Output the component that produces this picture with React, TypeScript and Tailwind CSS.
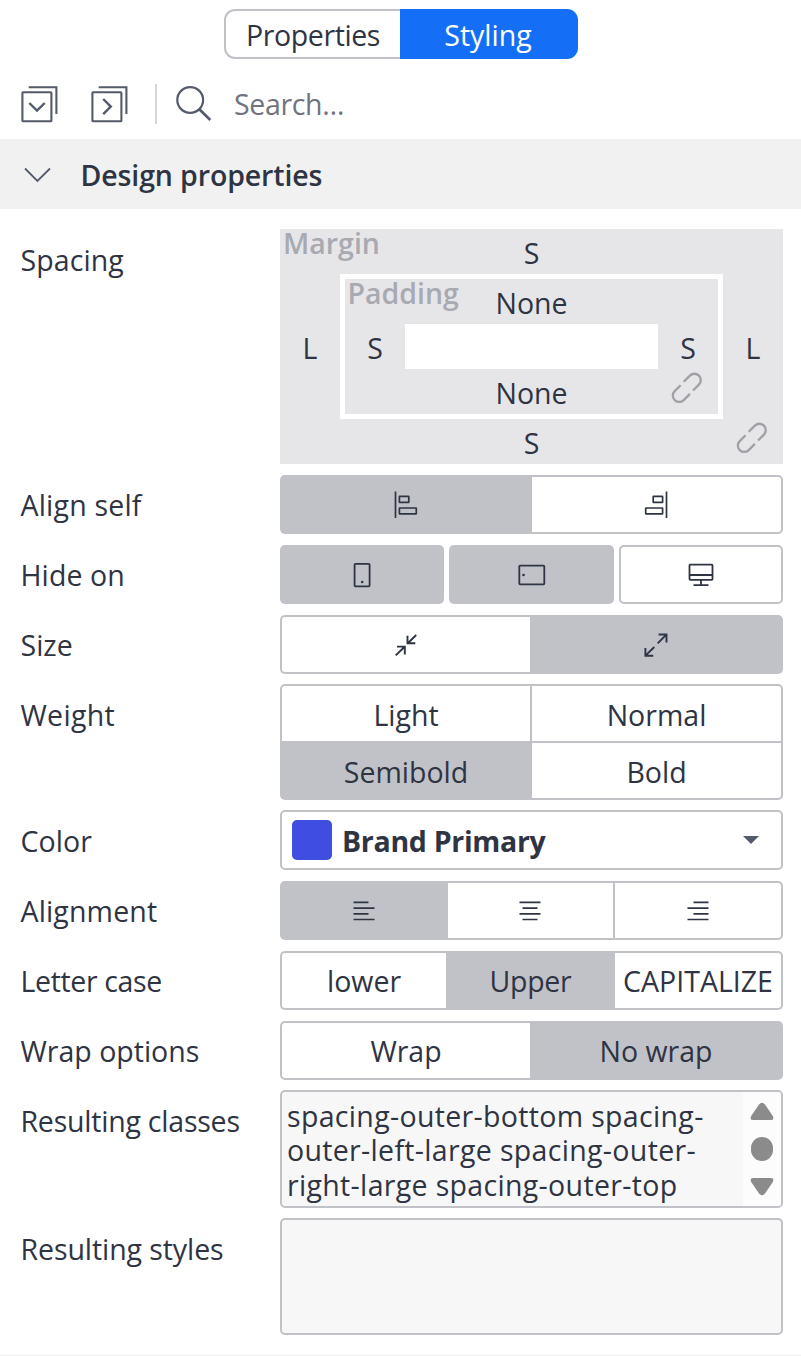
import type { ReactNode } from "react";

function Row({ label, offset = "pt-[10px]", tracking, className, children }: { label: string; offset?: string; tracking: string; className: string; children: ReactNode }) {
  return (
    <div className={`flex items-start ${className}`}>
      <div className={`w-[280px] shrink-0 pl-[20.5px] leading-[40px] whitespace-nowrap ${offset} ${tracking}`}>{label}</div>
      <div className="w-[503px]">{children}</div>
    </div>
  );
}

const cell = "flex items-center justify-center whitespace-nowrap";
const group = "flex h-[59px] rounded-[5px] bg-[#c1c2c8] p-[2px]";
const left = "rounded-l-[3px] bg-white";
const right = "rounded-r-[3px] bg-white";
const svgBase = { fill: "none", stroke: "#2f3443" };

function StackIcon({ d }: { d: string }) {
  return (
    <svg width="38" height="38" viewBox="0 0 38 38" fill="none" stroke="#535a69" strokeWidth="2.1">
      <rect x="2.4" y="7.2" width="29" height="29" rx="0.8" />
      <path d="M8.7 2.2H36.4V29" />
      <path d={d} strokeWidth="2.4" />
    </svg>
  );
}

function LinkIcon() {
  return (
    <svg width="32" height="32" viewBox="0 0 32 32" fill="none" stroke="#9fa1a7" strokeWidth="2.3">
      <path d="M12.7 9.8L18.9 3.6A6.35 6.35 0 0 1 27.9 12.6L22 18.5" />
      <path d="M18.9 21.9L12.7 28.1A6.35 6.35 0 0 1 3.7 19.1L9.6 13.2" />
    </svg>
  );
}

function AlignSelfIcon({ end = false }: { end?: boolean }) {
  return (
    <svg width="24" height="28" viewBox="0 0 24 28" {...svgBase} strokeWidth="1.7" className={end ? "-scale-x-100" : ""}>
      <path d="M1.5 0.5V27" />
      <rect x="5.4" y="5.4" width="9.4" height="6" rx="0.4" />
      <rect x="5.4" y="17" width="16.9" height="5.8" rx="0.4" />
    </svg>
  );
}

function LinesIcon({ d }: { d: string }) {
  return (
    <svg width="22" height="20" viewBox="0 0 22 20" {...svgBase} strokeWidth="1.7">
      <path d={d} />
    </svg>
  );
}

export default function App() {
  return (
    <div className="flex h-[1356px] w-[801px] flex-col overflow-hidden border-b border-[#ededee] bg-white font-['Open_Sans','Noto_Sans',sans-serif] text-[28.5px] text-[#2f3443]">
      <div className="ml-[224px] mt-[9px] flex h-[50px] w-[354px] shrink-0">
        <div className="flex w-[176px] items-center justify-center rounded-l-[11px] border-2 border-r-0 border-[#c1c2c8] pt-[3px] tracking-[-0.4px]">
          Properties
        </div>
        <div className="flex flex-1 items-center justify-center rounded-r-[11px] bg-[#146ff6] pr-[2px] pt-[3px] text-white">Styling</div>
      </div>

      <div className="mt-[25px] flex h-[40px] shrink-0 items-center pl-[20px] text-[#70747f]">
        <StackIcon d="M9.3 18L17 25.6L24.7 18" />
        <div className="w-[32px]" />
        <StackIcon d="M13.2 14L20.8 21.6L13.2 29.2" />
        <div className="ml-[27px] h-[40px] w-[2px] bg-[#d5d6d9]" />
        <svg className="ml-[18px]" width="38" height="38" viewBox="0 0 38 38" fill="none" stroke="#535a69" strokeWidth="2.2">
          <circle cx="15.2" cy="15" r="12.9" />
          <path d="M24.3 24.2L35.3 35" strokeWidth="2.7" />
        </svg>
        <div className="ml-[21px] mt-[-1px] leading-[40px] tracking-[-0.35px]">Search…</div>
      </div>

      <div className="mt-[15px] flex h-[70px] shrink-0 items-center bg-[#f1f1f2] pl-[24px] pt-[2px] font-semibold">
        <svg width="27" height="16" viewBox="0 0 27 16" fill="none" stroke="#535a69" strokeWidth="1.8">
          <path d="M1 1.5L13.4 14L26 1.5" />
        </svg>
        <div className="ml-[29.5px] tracking-[-0.12px]">Design properties</div>
      </div>

      <Row label="Spacing" offset="pt-[11px]" tracking="tracking-[0.1px]" className="mt-[20px] h-[246px]">
        <div className="relative flex h-[235px] flex-col bg-[#e6e6e9]">
          <div className="absolute left-[3px] top-[-6px] leading-[40px] font-semibold text-[#a9aab1]">Margin</div>
          <div className="flex h-[45px] items-center justify-center pt-[4px]">S</div>
          <div className="flex h-[145px]">
            <div className="flex w-[60px] items-center justify-center pt-[4px]">L</div>
            <div className="relative flex w-[383px] flex-col border-5 border-white">
              <div className="absolute left-[2.5px] top-[-6px] leading-[40px] font-semibold text-[#a9aab1]">Padding</div>
              <div className="flex h-[45px] items-center justify-center pt-[4px]">None</div>
              <div className="flex h-[45px]">
                <div className="flex w-[60px] items-center justify-center pt-[4px]">S</div>
                <div className="w-[253px] bg-white" />
                <div className="flex w-[60px] items-center justify-center pt-[4px]">S</div>
              </div>
              <div className="flex h-[45px] items-center justify-center pt-[4px]">None</div>
              <div className="absolute left-[326px] top-[93px]"><LinkIcon /></div>
            </div>
            <div className="flex w-[60px] items-center justify-center pt-[4px]">L</div>
          </div>
          <div className="flex h-[45px] items-center justify-center pt-[4px]">S</div>
          <div className="absolute left-[456px] top-[193px]"><LinkIcon /></div>
        </div>
      </Row>

      <Row label="Align self" tracking="tracking-[0.2px]" className="h-[70px]">
        <div className={group}>
          <div className={`${cell} w-[250px] pr-[2px]`}><AlignSelfIcon /></div>
          <div className={`${cell} ${right} flex-1 pr-[2px]`}><AlignSelfIcon end /></div>
        </div>
      </Row>

      <Row label="Hide on" tracking="tracking-[0.1px]" className="h-[70px]">
        <div className="flex gap-[5px]">
          <div className={`${cell} h-[59px] w-[164px] rounded-[5px] bg-[#c1c2c8]`}>
            <svg width="18" height="26" viewBox="0 0 18 26" {...svgBase} strokeWidth="1.8">
              <rect x="1.6" y="1.9" width="15" height="22.4" rx="0.8" />
              <circle cx="9.2" cy="20" r="1.3" fill="#2f3443" stroke="none" />
            </svg>
          </div>
          <div className={`${cell} h-[59px] w-[165px] rounded-[5px] bg-[#c1c2c8]`}>
            <svg width="28" height="22" viewBox="0 0 28 22" {...svgBase} strokeWidth="1.8">
              <rect x="1.3" y="1.7" width="25" height="18.6" rx="0.8" />
              <circle cx="5.5" cy="11" r="1.3" fill="#2f3443" stroke="none" />
            </svg>
          </div>
          <div className={`${cell} h-[59px] w-[164px] rounded-[5px] border-2 border-[#c1c2c8]`}>
            <svg width="26" height="24" viewBox="0 0 26 24" {...svgBase} strokeWidth="1.8">
              <rect x="1.5" y="1.6" width="23" height="15.2" rx="0.8" />
              <path d="M1.4 12H24.6M13 17V22M5.5 22.2H20.5" />
            </svg>
          </div>
        </div>
      </Row>

      <Row label="Size" tracking="tracking-[0px]" className="h-[69px]">
        <div className={group}>
          <div className={`${cell} ${left} w-[248px]`}>
            <svg width="24" height="24" viewBox="0 0 24 24" {...svgBase} strokeWidth="1.9">
              <path d="M22.2 2L13.8 10.2M13.5 2.8V10.3H21.3M1.7 22.4L10.4 14M3 13.6H10.8V21.4" />
            </svg>
          </div>
          <div className={`${cell} flex-1`}>
            <svg width="24" height="24" viewBox="0 0 24 24" {...svgBase} strokeWidth="1.9">
              <path d="M13.7 10.4L22.3 1.6M14.6 1.5H22.5V9.4M10.3 14L1.5 22.6M1.4 15V22.7H9.2" />
            </svg>
          </div>
        </div>
      </Row>

      <Row label="Weight" offset="pt-[11px]" tracking="tracking-[0.3px]" className="h-[126px]">
        <div className="grid h-[116px] grid-cols-[248px_249px] grid-rows-[55px_55px] gap-[2px] rounded-[5px] bg-[#c1c2c8] p-[2px]">
          <div className={`${cell} rounded-tl-[3px] bg-white pt-[4px]`}>Light</div>
          <div className={`${cell} rounded-tr-[3px] bg-white pt-[4px]`}>Normal</div>
          <div className={`${cell} pt-[4px]`}>Semibold</div>
          <div className={`${cell} rounded-br-[3px] bg-white pt-[4px]`}>Bold</div>
        </div>
      </Row>

      <Row label="Color" offset="pt-[11px]" tracking="tracking-[0.1px]" className="h-[71px]">
        <div className="flex h-[60px] items-center rounded-[5px] border-2 border-[#c1c2c8] pl-[10px] pr-[22px]">
          <div className="size-[40px] rounded-[5px] bg-[#3f4ee0]" />
          <div className="ml-[10px] flex-1 pt-[3px] font-bold tracking-[-0.3px]">Brand Primary</div>
          <svg width="16" height="8" viewBox="0 0 16 8" fill="#535a69"><path d="M0 0H16L8 8Z" /></svg>
        </div>
      </Row>

      <Row label="Alignment" tracking="tracking-[0.15px]" className="h-[70px]">
        <div className={group}>
          <div className={`${cell} w-[166px] pr-[2px]`}><LinesIcon d="M0.5 1.4H15.5M0.5 7.2H21.5M0.5 12.9H15.5M0.5 18.5H21.5" /></div>
          <div className={`${cell} w-[165px] bg-white pr-[1px]`}><LinesIcon d="M0.5 1.4H21.5M3.5 7.2H18.5M0.5 12.9H21.5M3.5 18.5H18.5" /></div>
          <div className={`${cell} ${right} ml-[2px] flex-1`}><LinesIcon d="M6.5 1.4H21.5M0.5 7.2H21.5M6.5 12.9H21.5M0.5 18.5H21.5" /></div>
        </div>
      </Row>

      <Row label="Letter case" tracking="tracking-[-0.35px]" className="h-[70px]">
        <div className={group}>
          <div className={`${cell} ${left} w-[164px] pt-[2px]`}>lower</div>
          <div className={`${cell} w-[169px] pt-[2px] tracking-[-0.3px]`}>Upper</div>
          <div className={`${cell} ${right} flex-1 pt-[2px]`}>CAPITALIZE</div>
        </div>
      </Row>

      <Row label="Wrap options" tracking="tracking-[0px]" className="h-[69px]">
        <div className={group}>
          <div className={`${cell} ${left} w-[248px] pt-[2px]`}>Wrap</div>
          <div className={`${cell} flex-1 pl-[1px] pt-[2px]`}>No wrap</div>
        </div>
      </Row>

      <Row label="Resulting classes" offset="pt-[11px]" tracking="tracking-[-0.22px]" className="h-[128px]">
        <div className="flex h-[118px] overflow-hidden rounded-[5px] border-2 border-[#c1c2c8] bg-[#f7f7f7]">
          <div className="flex w-[461px] flex-col pl-[5px] pt-[7px] leading-[34.3px] tracking-[0.33px] whitespace-nowrap">
            <div>spacing-outer-bottom spacing-</div>
            <div>outer-left-large spacing-outer-</div>
            <div>right-large spacing-outer-top</div>
          </div>
          <div className="flex flex-1 justify-center bg-[#fcfcfc] pt-[10px]">
            <svg width="24" height="94" viewBox="0 0 24 94" fill="#8b8b8b">
              <path d="M9 2.4Q12 -1 15 2.4L22.8 14Q24.4 18 21 18H3Q-0.4 18 1.2 14Z" />
              <rect x="1" y="35" width="22" height="24" rx="11" />
              <path d="M3 76H21Q24.4 76 22.8 80L15 91.6Q12 95 9 91.6L1.2 80Q-0.4 76 3 76Z" />
            </svg>
          </div>
        </div>
      </Row>

      <Row label="Resulting styles" offset="pt-[11px]" tracking="tracking-[-0.08px]" className="h-[117px]">
        <div className="h-[117px] rounded-[5px] border-2 border-[#c1c2c8] bg-[#f7f7f7]" />
      </Row>
    </div>
  );
}
